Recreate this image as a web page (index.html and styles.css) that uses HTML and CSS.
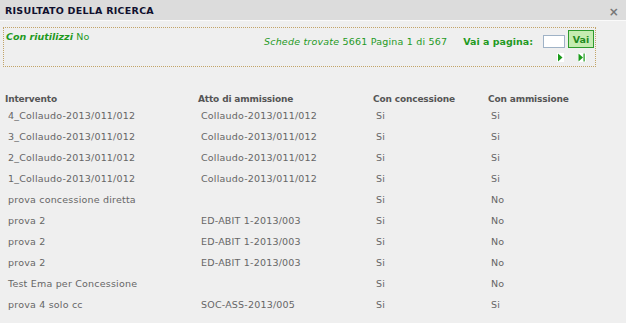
FILE: index.html
```html
<!DOCTYPE html>
<html lang="it">
<head>
<meta charset="utf-8">
<title>Risultato della ricerca</title>
<link rel="stylesheet" href="styles.css">
</head>
<body>
<div class="dialog">
  <div class="titlebar">
    <span class="title">RISULTATO DELLA RICERCA</span>
    <span class="close">×</span>
  </div>
  <div class="filters">
    <div class="reuse"><span class="lbl">Con riutilizzi</span> No</div>
    <div class="pager">
      <div class="pager-row">
        <span class="found"><i>Schede trovate</i> 5661 Pagina 1 di 567</span>
        <span class="goto">Vai a pagina:</span>
        <input class="page-input" type="text">
        <button class="go">Vai</button>
      </div>
      <div class="nav-row">
        <span class="nav next"><svg width="7" height="9" viewBox="0 0 7 9"><rect width="7" height="9" fill="#fff"/><path d="M1 0.5 L5.5 4.5 L1 8.5 Z" fill="#1a9a1a"/></svg></span>
        <span class="nav last"><svg width="8" height="9" viewBox="0 0 8 9"><rect width="8" height="9" fill="#fff"/><path d="M0.5 0.5 L5 4.5 L0.5 8.5 Z" fill="#1a9a1a"/><rect x="5.5" y="0.5" width="1.2" height="8" fill="#1a9a1a"/></svg></span>
      </div>
    </div>
  </div>
  <div class="results">
    <div class="row head"><span>Intervento</span><span>Atto di ammissione</span><span>Con concessione</span><span>Con ammissione</span></div>
    <div class="row"><span>4_Collaudo-2013/011/012</span><span>Collaudo-2013/011/012</span><span>Si</span><span>Si</span></div>
    <div class="row"><span>3_Collaudo-2013/011/012</span><span>Collaudo-2013/011/012</span><span>Si</span><span>Si</span></div>
    <div class="row"><span>2_Collaudo-2013/011/012</span><span>Collaudo-2013/011/012</span><span>Si</span><span>Si</span></div>
    <div class="row"><span>1_Collaudo-2013/011/012</span><span>Collaudo-2013/011/012</span><span>Si</span><span>Si</span></div>
    <div class="row"><span>prova concessione diretta</span><span></span><span>Si</span><span>No</span></div>
    <div class="row"><span>prova 2</span><span>ED-ABIT 1-2013/003</span><span>Si</span><span>No</span></div>
    <div class="row"><span>prova 2</span><span>ED-ABIT 1-2013/003</span><span>Si</span><span>No</span></div>
    <div class="row"><span>prova 2</span><span>ED-ABIT 1-2013/003</span><span>Si</span><span>No</span></div>
    <div class="row"><span>Test Ema per Concessione</span><span></span><span>Si</span><span>No</span></div>
    <div class="row"><span>prova 4 solo cc</span><span>SOC-ASS-2013/005</span><span>Si</span><span>Si</span></div>
  </div>
</div>
</body>
</html>
```

FILE: styles.css
```css
html, body {
  margin: 0;
  padding: 0;
  background: #efefef;
}
body {
  font-family: "DejaVu Sans", Verdana, sans-serif;
  font-size: 9.5px;
  letter-spacing: 0.2px;
  color: #666;
  overflow: hidden;
}
.dialog {
  width: 626px;
  height: 323px;
}
.titlebar {
  height: 20px;
  background: #dcdcdc;
  border-bottom: 1px solid #fafafa;
  display: flex;
  align-items: center;
  justify-content: space-between;
  padding: 0 7px 0 5px;
}
.title {
  font-weight: bold;
  font-size: 9.5px;
  color: #10102e;
  letter-spacing: 0.25px;
}
.close {
  font-size: 12px;
  color: #777;
  font-weight: bold;
  margin-top: 3px;
}
.filters {
  margin: 6px 30px 0 3px;
  height: 38px;
  border: 1px dotted #c2a468;
  display: flex;
  justify-content: space-between;
  padding: 0 1px 0 2px;
}
.reuse {
  color: #1f9a1f;
  margin-top: 3px;
}
.reuse .lbl {
  font-weight: bold;
  font-style: italic;
  letter-spacing: 0;
}
.pager {
  display: flex;
  flex-direction: column;
  align-items: flex-end;
}
.pager-row {
  display: flex;
  align-items: flex-end;
  margin-top: 2px;
}
.found {
  color: #1f9a1f;
  margin-bottom: 1px;
}
.goto {
  color: #1f9a1f;
  font-weight: bold;
  letter-spacing: 0;
  margin-left: 16px;
  margin-bottom: 1px;
}
.page-input {
  width: 22px;
  height: 13px;
  box-sizing: border-box;
  border: 1px solid #9fb2c6;
  background: #fff;
  margin: 0 3px 0 10px;
  padding: 0;
}
.go {
  width: 26px;
  height: 18px;
  box-sizing: border-box;
  border: 1px solid #2e9a2e;
  background: #c4ecb0;
  color: #1f8a1f;
  font-family: "DejaVu Sans", Verdana, sans-serif;
  font-weight: bold;
  font-size: 9.5px;
  padding: 0;
}
.nav-row {
  display: flex;
  gap: 14px;
  margin-top: 5px;
  margin-right: 8px;
}
.nav svg {
  display: block;
}
.results {
  margin: 25px 0 0 5px;
}
.row {
  display: grid;
  grid-template-columns: 193px 175px 115px 1fr;
  height: 21px;
  align-items: center;
}
.row span {
  padding-left: 3px;
  white-space: nowrap;
}
.row.head {
  height: 13px;
  font-weight: bold;
  font-size: 9px;
  letter-spacing: -0.15px;
  color: #555;
}
.row.head span {
  padding-left: 0;
}
```
